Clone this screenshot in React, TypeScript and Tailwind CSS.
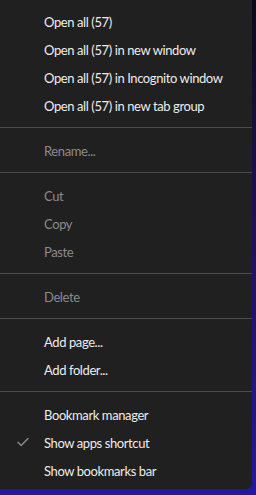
const groups: { label: string; disabled?: boolean; checked?: boolean }[][] = [
  [
    { label: 'Open all (57)' },
    { label: 'Open all (57) in new window' },
    { label: 'Open all (57) in Incognito window' },
    { label: 'Open all (57) in new tab group' },
  ],
  [{ label: 'Rename...', disabled: true }],
  [
    { label: 'Cut', disabled: true },
    { label: 'Copy', disabled: true },
    { label: 'Paste', disabled: true },
  ],
  [{ label: 'Delete', disabled: true }],
  [{ label: 'Add page...' }, { label: 'Add folder...' }],
  [
    { label: 'Bookmark manager' },
    { label: 'Show apps shortcut', checked: true },
    { label: 'Show bookmarks bar' },
  ],
];

const Check = () => (
  <svg width="12" height="10" viewBox="0 0 12 10" fill="none">
    <path d="M1 5.2 L4.2 8.4 L11 1.4" stroke="#8c8c8c" strokeWidth="1.4" strokeLinecap="round" strokeLinejoin="round" />
  </svg>
);

const App = () => {
  return (
    <div
      className="w-[256px] h-[495px] overflow-hidden bg-gradient-to-b from-[#0c0a1c] via-[#23105c] to-[#2318a0]"
      style={{ fontFamily: 'Lato, "Noto Sans", sans-serif' }}
    >
      <div className="w-[252px] h-[489px] bg-[#202020] rounded-br-md flex flex-col pt-[7px]">
        {groups.map((group, gi) => (
          <div key={gi} className="flex flex-col">
            {gi > 0 && <div className="h-px bg-[#4b4b4b] my-2" />}
            {group.map((item) => (
              <div key={item.label} className="h-[28px] flex items-center">
                <div className="w-[44px] flex justify-center pl-[2px]">{item.checked && <Check />}</div>
                <span className={`text-[13px] tracking-[-0.4px] leading-none pt-[2px] ${item.disabled ? 'text-[#8b8b8b]' : 'text-[#ececec]'}`}>{item.label}</span>
              </div>
            ))}
          </div>
        ))}
      </div>
    </div>
  );
};

export default App;
